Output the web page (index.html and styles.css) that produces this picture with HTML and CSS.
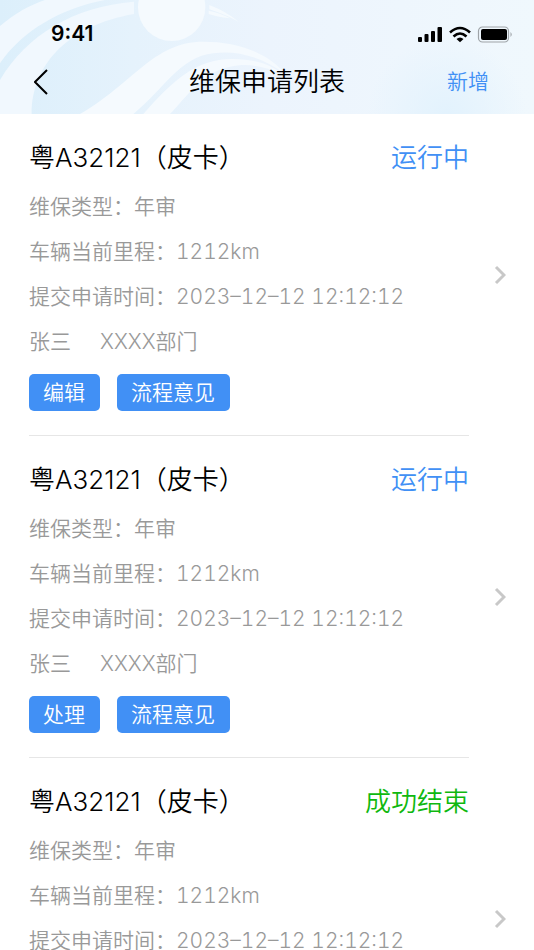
FILE: index.html
```
<!DOCTYPE html>
<html lang="zh-CN">
  <head>
    <meta charset="utf-8">
    <meta name="viewport" content="width=device-width, initial-scale=1">
    <title>维保申请列表</title>
    <link rel="stylesheet" href="styles.css">
  </head>
  <body>
    <header class="header">
      <svg class="header-bg" viewBox="0 0 1602 342" preserveAspectRatio="xMidYMid slice" aria-hidden="true">
        <defs>
          <linearGradient id="sky" x1="0" y1="0" x2="1" y2="0">
            <stop offset="0" stop-color="#dceffb"/>
            <stop offset=".25" stop-color="#e5f2fc"/>
            <stop offset=".5" stop-color="#ecf4fd"/>
            <stop offset="1" stop-color="#f0f8fd"/>
          </linearGradient>
          <radialGradient id="glow" cx="1340" cy="350" r="240" gradientUnits="userSpaceOnUse">
            <stop offset="0" stop-color="#e2f2fd"/>
            <stop offset="1" stop-color="#e2f2fd" stop-opacity="0"/>
          </radialGradient>
        </defs>
        <rect width="1602" height="342" fill="url(#sky)"/>
        <rect x="1000" width="602" height="342" fill="url(#glow)"/>
        <g fill="#f1f8fe">
          <path d="M0 78C45 40 90 15 135 0H315C180 25 65 95 0 190Z"/>
          <path d="M0 240C80 105 220 20 402 5V42C210 75 95 190 95 342H0Z"/>
        </g>
        <g fill="#f5fafe">
          <circle cx="515" cy="22" r="101"/>
          <path d="M628 15Q680 35 715 65Q680 45 628 28ZM626 32Q660 38 690 55Q650 50 626 42Z"/>
          <path d="M240 342C400 250 460 125 610 125C710 125 800 155 860 225C780 165 700 150 640 160C540 170 490 270 400 342Z"/>
          <path d="M430 342C520 240 590 175 700 177C760 178 810 190 850 225C790 195 740 190 690 200C610 215 560 290 510 342Z"/>
        </g>
      </svg>
      <div class="status-bar">
        <span class="time">9:41</span>
        <svg class="status-icons" width="96" height="18" viewBox="0 0 96 18" aria-hidden="true">
          <rect x="1" y="12" width="4" height="5" rx="1"/>
          <rect x="7.500" y="9" width="4" height="8" rx="1"/>
          <rect x="14" y="6" width="4" height="11" rx="1"/>
          <rect x="20.500" y="2" width="4.500" height="15" rx="1"/>
          <g fill="none" stroke="#000" stroke-width="2.600">
            <path d="M33 7.500Q43 -1.500 53 7.500"/>
            <path d="M36.500 11.500Q43 5.500 49.500 11.500"/>
          </g>
          <path d="M39.500 14Q43 11 46.500 14L43 17.300Z"/>
          <rect x="61.500" y="2" width="30" height="15" rx="4" fill="none" stroke="#9fa4a8" stroke-width="1.200"/>
          <rect x="64" y="4" width="26" height="11" rx="2"/>
          <path d="M93.500 7Q96 9.500 93.500 12Z" fill="#9fa4a8"/>
        </svg>
      </div>
      <nav class="nav">
        <button class="back" type="button" aria-label="返回">
          <svg width="14" height="26" viewBox="0 0 14 26" aria-hidden="true">
            <path d="M13 1L1 13L13 25" fill="none" stroke="#000" stroke-width="2"/>
          </svg>
        </button>
        <h1 class="title">维保申请列表</h1>
        <a class="add" href="#">新增</a>
      </nav>
    </header>

    <main class="list">
      <article class="item">
        <div class="item-main">
          <div class="item-head">
            <h2 class="plate">粤A32121（皮卡）</h2>
            <span class="state">运行中</span>
          </div>
          <p class="row">维保类型：年审</p>
          <p class="row">车辆当前里程：1212km</p>
          <p class="row">提交申请时间：2023–12–12 12:12:12</p>
          <p class="row person"><span>张三</span><span>XXXX部门</span></p>
          <div class="actions">
            <button class="btn" type="button">编辑</button>
            <button class="btn" type="button">流程意见</button>
          </div>
        </div>
        <svg class="arrow" width="12" height="20" viewBox="0 0 12 20" aria-hidden="true">
          <path d="M2 2L10 10L2 18"/>
        </svg>
      </article>

      <article class="item">
        <div class="item-main">
          <div class="item-head">
            <h2 class="plate">粤A32121（皮卡）</h2>
            <span class="state">运行中</span>
          </div>
          <p class="row">维保类型：年审</p>
          <p class="row">车辆当前里程：1212km</p>
          <p class="row">提交申请时间：2023–12–12 12:12:12</p>
          <p class="row person"><span>张三</span><span>XXXX部门</span></p>
          <div class="actions">
            <button class="btn" type="button">处理</button>
            <button class="btn" type="button">流程意见</button>
          </div>
        </div>
        <svg class="arrow" width="12" height="20" viewBox="0 0 12 20" aria-hidden="true">
          <path d="M2 2L10 10L2 18"/>
        </svg>
      </article>

      <article class="item">
        <div class="item-main">
          <div class="item-head">
            <h2 class="plate">粤A32121（皮卡）</h2>
            <span class="state done">成功结束</span>
          </div>
          <p class="row">维保类型：年审</p>
          <p class="row">车辆当前里程：1212km</p>
          <p class="row">提交申请时间：2023–12–12 12:12:12</p>
          <p class="row person"><span>张三</span><span>XXXX部门</span></p>
          <div class="actions">
            <button class="btn" type="button">流程意见</button>
          </div>
        </div>
        <svg class="arrow" width="12" height="20" viewBox="0 0 12 20" aria-hidden="true">
          <path d="M2 2L10 10L2 18"/>
        </svg>
      </article>
    </main>
  </body>
</html>
```
FILE: styles.css
```
* {
  box-sizing: border-box;
}

body {
  margin: 0;
  height: 100vh;
  display: flex;
  flex-direction: column;
  background: #fff;
  color: #000;
  font-family: Inter, "Noto Sans CJK SC", sans-serif;
  font-weight: 350;
}

h1, h2, p {
  margin: 0;
  font-weight: inherit;
}

button {
  font: inherit;
  border: 0;
  padding: 0;
  cursor: pointer;
}

/* header */
.header {
  position: relative;
  flex: none;
  padding-bottom: 11px;
}

.header-bg {
  position: absolute;
  top: 0;
  left: 0;
  width: 100%;
  height: 100%;
  z-index: -1;
}

.status-bar {
  display: flex;
  justify-content: space-between;
  align-items: center;
  padding: 20px 21px 0 51px;
}

.time {
  font-size: 21px;
  line-height: 27px;
  font-weight: 600;
}

.nav {
  display: grid;
  grid-template-columns: 1fr auto 1fr;
  align-items: center;
  margin-top: 14px;
  padding: 0 34px;
}

.back {
  justify-self: start;
  display: flex;
  background: none;
}

.title {
  font-size: 26px;
  line-height: 42px;
}

.add {
  justify-self: end;
  margin-right: 11px;
  font-size: 21px;
  line-height: 36px;
  color: #4190f5;
  text-decoration: none;
}

/* list */
.list {
  flex: 1;
  overflow-y: auto;
  scrollbar-width: none;
}

.item {
  display: flex;
  align-items: center;
  gap: 25px;
  padding: 0 28px 0 29px;
}

.item-main {
  flex: 1;
  padding: 24px 0;
  border-bottom: 1px solid #e6e6e6;
}

.item-head {
  display: flex;
  justify-content: space-between;
  margin-bottom: 6px;
  line-height: 40px;
}

.plate {
  font-size: 26px;
}

.state {
  font-size: 26px;
  color: #4190f5;
}

.state.done {
  color: #0fb80f;
}

.row {
  font-size: 21px;
  line-height: 45px;
  font-variant-numeric: tabular-nums;
  color: #999;
}

.person {
  display: flex;
  gap: 29px;
}

.actions {
  display: flex;
  gap: 17px;
  margin-top: 10px;
}

.btn {
  padding: 0 15px 0 14px;
  border-radius: 5px;
  background: #4190f5;
  color: #fff;
  font-size: 21px;
  line-height: 37px;
}

.arrow {
  flex: none;
  fill: none;
  stroke: #c8c8c8;
  stroke-width: 3;
}
```
